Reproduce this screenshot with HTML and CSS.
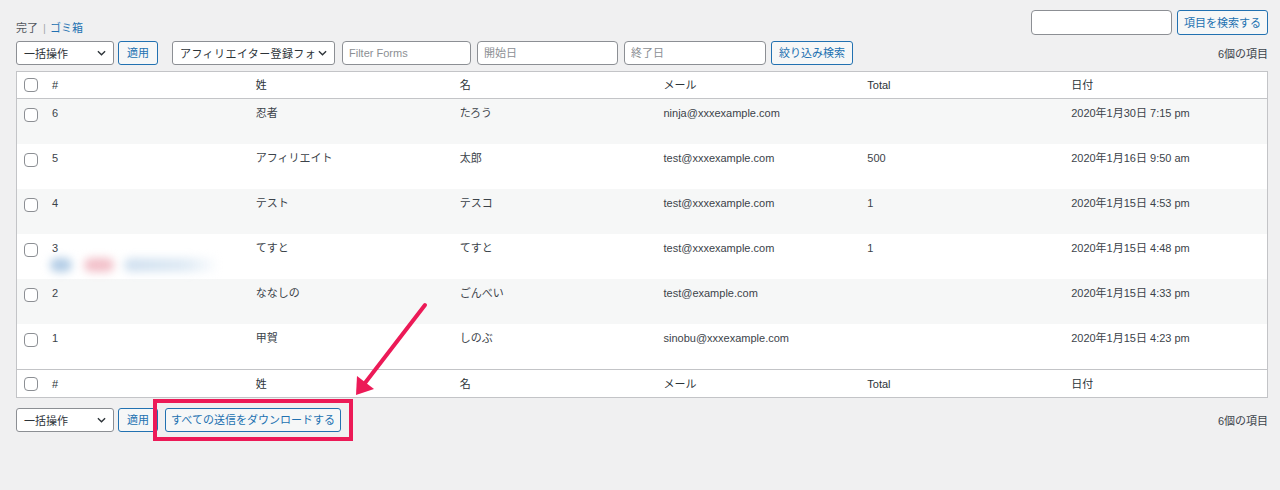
FILE: index.html
```html
<!DOCTYPE html>
<html lang="ja">
<head>
<meta charset="utf-8">
<title>Entries</title>
<link rel="stylesheet" href="styles.css">
</head>
<body>
<div class="wrap">
  <div class="top">
    <ul class="subsubsub">
      <li class="current">完了 <span class="sep">|</span></li>
      <li><a href="#">ゴミ箱</a></li>
    </ul>
    <div class="search">
      <input class="input search-input" type="text">
      <button class="btn btn-search">項目を検索する</button>
    </div>
  </div>

  <div class="tablenav">
    <div class="actions">
      <div class="select select-bulk"><span class="select-text">一括操作</span><svg class="chev" viewBox="0 0 10 6"><path d="M1 1 L5 5 L9 1"/></svg></div>
      <button class="btn btn-apply">適用</button>
      <div class="select select-form"><span class="select-text">アフィリエイター登録フォ</span><svg class="chev" viewBox="0 0 10 6"><path d="M1 1 L5 5 L9 1"/></svg></div>
      <input class="input input-filter" type="text" placeholder="Filter Forms">
      <input class="input input-start" type="text" placeholder="開始日">
      <input class="input input-end" type="text" placeholder="終了日">
      <button class="btn btn-filter">絞り込み検索</button>
    </div>
    <div class="count">6個の項目</div>
  </div>

  <table class="list">
    <colgroup>
      <col class="col-check">
      <col><col><col><col><col><col>
    </colgroup>
    <thead>
      <tr>
        <th class="check"><span class="checkbox"></span></th>
        <th>#</th><th>姓</th><th>名</th><th>メール</th><th>Total</th><th>日付</th>
      </tr>
    </thead>
    <tbody>
      <tr>
        <td class="check"><span class="checkbox"></span></td>
        <td>6</td><td>忍者</td><td>たろう</td><td>ninja@xxxexample.com</td><td></td><td>2020年1月30日 7:15 pm</td>
      </tr>
      <tr>
        <td class="check"><span class="checkbox"></span></td>
        <td>5</td><td>アフィリエイト</td><td>太郎</td><td>test@xxxexample.com</td><td>500</td><td>2020年1月16日 9:50 am</td>
      </tr>
      <tr>
        <td class="check"><span class="checkbox"></span></td>
        <td>4</td><td>テスト</td><td>テスコ</td><td>test@xxxexample.com</td><td>1</td><td>2020年1月15日 4:53 pm</td>
      </tr>
      <tr>
        <td class="check"><span class="checkbox"></span></td>
        <td>3<div class="blurred"><span class="b1"></span><span class="b2"></span><span class="b3"></span></div></td><td>てすと</td><td>てすと</td><td>test@xxxexample.com</td><td>1</td><td>2020年1月15日 4:48 pm</td>
      </tr>
      <tr>
        <td class="check"><span class="checkbox"></span></td>
        <td>2</td><td>ななしの</td><td>ごんべい</td><td>test@example.com</td><td></td><td>2020年1月15日 4:33 pm</td>
      </tr>
      <tr>
        <td class="check"><span class="checkbox"></span></td>
        <td>1</td><td>甲賀</td><td>しのぶ</td><td>sinobu@xxxexample.com</td><td></td><td>2020年1月15日 4:23 pm</td>
      </tr>
    </tbody>
    <tfoot>
      <tr>
        <th class="check"><span class="checkbox"></span></th>
        <th>#</th><th>姓</th><th>名</th><th>メール</th><th>Total</th><th>日付</th>
      </tr>
    </tfoot>
  </table>

  <div class="tablenav bottom">
    <div class="actions">
      <div class="select select-bulk"><span class="select-text">一括操作</span><svg class="chev" viewBox="0 0 10 6"><path d="M1 1 L5 5 L9 1"/></svg></div>
      <button class="btn btn-apply">適用</button>
      <span class="dl-wrap">
        <button class="btn btn-download">すべての送信をダウンロードする</button>
        <span class="highlight"></span>
      </span>
    </div>
    <div class="count">6個の項目</div>
  </div>

  <svg class="arrow" viewBox="0 0 100 110" width="100" height="110">
    <line x1="85" y1="15" x2="25" y2="93" stroke="#ec1a57" stroke-width="4" stroke-linecap="round"/>
    <polygon points="16,105 17,86 34,99" fill="#ec1a57"/>
  </svg>
</div>
</body>
</html>
```

FILE: styles.css
```css
* { box-sizing: border-box; }

body {
  margin: 0;
  background: #f0f0f1;
  font-family: "Liberation Sans", "Noto Sans CJK JP", sans-serif;
  font-size: 11px;
  color: #3c434a;
}

.wrap {
  position: relative;
  height: 490px;
  padding: 10px 12px 0 16px;
}

.top {
  display: flex;
  justify-content: space-between;
  align-items: flex-start;
  height: 25px;
  margin-bottom: 6px;
}

.subsubsub {
  list-style: none;
  margin: 10px 0 0;
  padding: 0;
  display: flex;
  gap: 4px;
  line-height: 16px;
  color: #50575e;
}

.subsubsub .sep { color: #a7aaad; margin-left: 2px; }

.subsubsub a { color: #2271b1; text-decoration: none; }

.search { display: flex; gap: 5px; }

.input {
  height: 24px;
  border: 1px solid #8c8f94;
  border-radius: 4px;
  background: #fff;
  padding: 0 6px;
  font: inherit;
  font-size: 11px;
  color: #2c3338;
  outline: none;
}

.input::placeholder { color: #8c8f94; }

.search-input { width: 141px; height: 25px; }

.btn {
  height: 24px;
  border: 1px solid #2271b1;
  border-radius: 3px;
  background: #f6f7f7;
  color: #2271b1;
  font: inherit;
  font-size: 11px;
  line-height: 22px;
  padding: 0;
  display: inline-flex;
  align-items: center;
  justify-content: center;
  white-space: nowrap;
}

.btn-search { width: 91px; height: 25px; }
.btn-apply { width: 40px; margin-left: 4px; }
.btn-filter { width: 82px; margin-left: 5px; }
.btn-download { width: 176px; }

.tablenav {
  display: flex;
  justify-content: space-between;
  align-items: center;
  height: 24px;
  margin-bottom: 6px;
}

.tablenav.bottom { margin-top: 10px; }

.actions { display: flex; align-items: center; }

.count { color: #3c434a; }

.select {
  display: inline-flex;
  align-items: center;
  height: 24px;
  border: 1px solid #8c8f94;
  border-radius: 3px;
  background: #fff;
  color: #2c3338;
  padding: 0 7px 0 7px;
  gap: 1px;
}

.select-text {
  flex: 1;
  white-space: nowrap;
}

.select-form .select-text { letter-spacing: 0.4px; }

.chev {
  width: 9px;
  height: 6px;
  flex: none;
  fill: none;
  stroke: #2c3338;
  stroke-width: 1.5;
}

.select-bulk { width: 98px; }
.select-form { width: 163px; margin-left: 14px; }

.input-filter { width: 129px; margin-left: 7px; }
.input-start { width: 141px; margin-left: 6px; }
.input-end { width: 142px; margin-left: 6px; }

.list {
  width: 100%;
  table-layout: fixed;
  border-collapse: separate;
  border-spacing: 0;
  border: 1px solid #c3c4c7;
  background: #fff;
}

.col-check { width: 27px; }

.list th {
  text-align: left;
  font-weight: normal;
  color: #2c3338;
  padding: 5px 8px;
  line-height: 16px;
  vertical-align: middle;
}

.list thead th { border-bottom: 1px solid #c3c4c7; }
.list tfoot th { border-top: 1px solid #c3c4c7; padding-top: 6px; }

.list tbody tr { height: 45px; }
.list tbody tr:nth-child(odd) { background: #f6f7f7; }

.list td {
  padding: 6px 8px 0;
  line-height: 16px;
  vertical-align: top;
  color: #3c434a;
  white-space: nowrap;
}

.list th.check { padding: 0 0 0 7px; }
.list td.check { padding: 9px 0 0 7px; }

.checkbox {
  display: block;
  width: 14px;
  height: 14px;
  border: 1px solid #8c8f94;
  border-radius: 4px;
  background: #fff;
}

.blurred {
  display: flex;
  align-items: center;
  height: 18px;
  margin-left: -2px;
  filter: blur(4px);
}

.blurred span { display: block; height: 14px; border-radius: 7px; }
.blurred .b1 { width: 22px; background: #b3cde6; }
.blurred .b2 { width: 30px; margin-left: 12px; background: #f2c0c9; }
.blurred .b3 { width: 95px; margin-left: 10px; background: linear-gradient(90deg, #d0e0ef, #e0ebf5 65%, rgba(240,244,248,0)); }

.dl-wrap {
  position: relative;
  display: inline-flex;
  margin-left: 7px;
}

.highlight {
  position: absolute;
  left: -12px;
  right: -12px;
  top: -9px;
  bottom: -9px;
  border: 4px solid #ec1a57;
  pointer-events: none;
}

.arrow {
  position: absolute;
  left: 340px;
  top: 290px;
}
```
